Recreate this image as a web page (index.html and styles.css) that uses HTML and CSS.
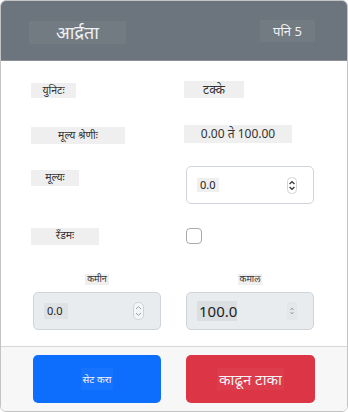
FILE: index.html
```html
<!DOCTYPE html>
<html lang="mr">
<head>
<meta charset="utf-8" />
<title>आर्द्रता</title>
<link rel="stylesheet" href="styles.css">
</head>
<body>
<div class="card">
    <div class="card-head">
        <span class="title">आर्द्रता</span>
        <span class="page">पनि 5</span>
    </div>
    <div class="card-body">
        <div class="row row-unit">
            <div class="cell"><span class="lbl lbl-unit">युनिटः</span></div>
            <div class="cell"><span class="val val-unit">टक्के</span></div>
        </div>
        <div class="row row-range">
            <div class="cell"><span class="lbl lbl-range">मूल्य श्रेणीः</span></div>
            <div class="cell"><span class="val val-range">0.00 ते 100.00</span></div>
        </div>
        <div class="row row-value">
            <div class="cell"><span class="lbl lbl-value">मूल्यः</span></div>
            <div class="cell">
                <div class="field">
                    <span class="num">0.0</span>
                    <svg class="spin" width="10" height="17" viewBox="0 0 10 17">
                        <rect x="0.5" y="0.5" width="9" height="16" rx="4" fill="#fff" stroke="#d4d4d4"/>
                        <path d="M2.6 7 L5 4.6 L7.4 7" fill="none" stroke="#333" stroke-width="1.3"/>
                        <path d="M2.6 10 L5 12.4 L7.4 10" fill="none" stroke="#333" stroke-width="1.3"/>
                    </svg>
                </div>
            </div>
        </div>
        <div class="row row-random">
            <div class="cell"><span class="lbl lbl-random">रॅंडमः</span></div>
            <div class="cell"><span class="check"></span></div>
        </div>
        <div class="row row-limits">
            <div class="limit">
                <span class="cap">कमीन</span>
                <div class="field off">
                    <span class="num num-min">0.0</span>
                    <svg class="spin" width="11" height="18" viewBox="0 0 11 18">
                        <rect x="0.5" y="0.5" width="10" height="17" rx="4.5" fill="#f4f5f6" stroke="#d0d3d6"/>
                        <path d="M3 7 L5.5 4.6 L8 7" fill="none" stroke="#9aa0a6" stroke-width="1"/>
                        <path d="M3 11 L5.5 13.4 L8 11" fill="none" stroke="#9aa0a6" stroke-width="1"/>
                    </svg>
                </div>
            </div>
            <div class="limit">
                <span class="cap">कमाल</span>
                <div class="field off">
                    <span class="num num-max">100.0</span>
                    <svg class="spin" width="10" height="18" viewBox="0 0 10 18">
                        <rect x="0" y="0" width="10" height="18" rx="2" fill="#e4e6e9"/>
                        <path d="M3.8 7.6 L5 6.4 L6.2 7.6" fill="none" stroke="#555" stroke-width="0.8"/>
                        <path d="M3.8 10.4 L5 11.6 L6.2 10.4" fill="none" stroke="#555" stroke-width="0.8"/>
                    </svg>
                </div>
            </div>
        </div>
    </div>
    <div class="card-foot">
        <button class="btn btn-blue"><span class="btn-txt small">सेट करा</span></button>
        <button class="btn btn-red"><span class="btn-txt">काढून टाका</span></button>
    </div>
</div>
</body>
</html>
```

FILE: styles.css
```css
html, body{
	margin:0;
	padding:0;
	background:#fff;
}
body{
	font-family:"Noto Sans", "Liberation Sans", sans-serif;
	color:#222;
}

.card{
	width:346px;
	height:410px;
	border:1px solid #c4c4c4;
	border-radius:6px;
	overflow:hidden;
	display:flex;
	flex-direction:column;
}

/* 头部 */
.card-head{
	height:39px;
	flex:none;
	background:#6c757d;
	border-bottom:1px solid #8a9096;
	display:flex;
	justify-content:space-between;
	align-items:flex-start;
	padding:20px 32px 0 28px;
}
.title{
	width:97px;
	height:23px;
	line-height:23px;
	text-align:center;
	background:#737b82;
	color:#eef0f2;
	font-size:18px;
}
.page{
	width:55px;
	height:22px;
	line-height:22px;
	margin-top:-1px;
	text-align:center;
	background:#737b82;
	color:#eef0f2;
	font-size:13px;
}

/* 内容 */
.card-body{
	flex:1;
	padding:20px 32px 0 32px;
	background:#fff;
	border-bottom:1px solid #d6d6d6;
}
.row{
	display:grid;
	grid-template-columns:128px 128px;
	column-gap:25px;
	align-items:start;
}
.cell{
	display:flex;
}
.lbl, .val{
	display:block;
	background:#efefef;
	color:#333;
	text-align:center;
}
.lbl{
	margin-left:-2px;
	font-size:10.5px;
}
.val{
	margin-left:-2px;
	font-size:12px;
}

.row-unit{ height:17px; }
.lbl-unit{ width:45px; height:15px; line-height:15px; margin-top:2px; }
.val-unit{ width:60px; height:17px; line-height:17px; }

.row-range{ height:19px; margin-top:27px; }
.lbl-range{ width:94px; height:17px; line-height:17px; margin-top:2px; }
.val-range{ width:108px; height:18px; line-height:18px; font-size:12px; }

.row-value{ height:38px; margin-top:22px; }
.lbl-value{ width:48px; height:16px; line-height:14px; margin-top:4px; }

.row-random{ height:17px; margin-top:24px; }
.lbl-random{ width:68px; height:17px; line-height:14px; }

.field{
	box-sizing:border-box;
	width:129px;
	height:38px;
	border:1px solid #ced4da;
	border-radius:5px;
	background:#fff;
	display:flex;
	align-items:center;
	justify-content:space-between;
	padding:0 16px 0 10px;
}
.field.off{
	background:#e9ecef;
	width:128px;
}
.num{
	background:#efefef;
	font-size:11px;
	color:#222;
	height:14px;
	line-height:14px;
	padding:0 3px;
}
.num-min{
	background:#dfe2e5;
	height:16px;
	line-height:16px;
	width:18px;
	padding:0 3px;
}
.num-max{
	background:#dcdfe2;
	font-size:15px;
	height:20px;
	line-height:20px;
	padding:0 2px;
	width:36px;
}
.check{
	display:block;
	box-sizing:border-box;
	width:16px;
	height:16px;
	border:1px solid #a9a9a9;
	border-radius:4px;
	background:#fff;
}

.row-limits{ margin-top:29px; }
.limit{
	display:flex;
	flex-direction:column;
	align-items:center;
}
.cap{
	display:block;
	height:11px;
	line-height:10px;
	font-size:9px;
	background:#efefef;
	color:#333;
	padding:0 2px;
	margin-bottom:7px;
}

/* 底部 */
.card-foot{
	height:48px;
	flex:none;
	padding:8px 32px 8px 32px;
	background:#f7f7f7;
	display:grid;
	grid-template-columns:128px 129px;
	column-gap:25px;
}
.btn{
	border:0;
	border-radius:5px;
	height:48px;
	padding:0;
	display:flex;
	align-items:center;
	justify-content:center;
	font-family:"Noto Sans", "Liberation Sans", sans-serif;
	cursor:pointer;
}
.btn-blue{ background:#0d6efd; }
.btn-red{ background:#dc3545; }
.btn-txt{
	color:#f3f5f8;
	font-size:15px;
	line-height:22px;
	padding:0 2px;
	background:rgba(255,255,255,0.04);
}
.btn-txt.small{
	font-size:10px;
}
```
